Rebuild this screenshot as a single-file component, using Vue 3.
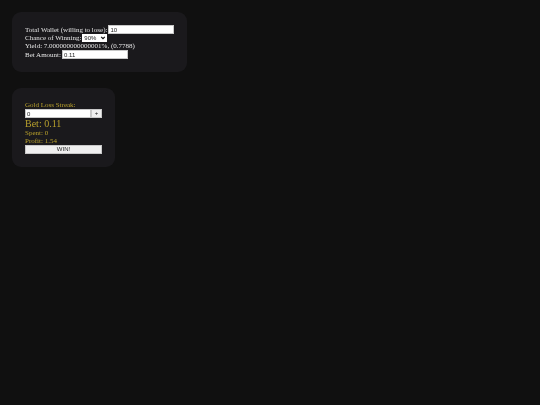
<script setup>
import { ref } from 'vue'

const wallet = ref('10')
const chance = ref('90')
const betAmount = ref('0.11')
const streak = ref(0)
const chances = ['90', '80', '70', '60', '50']
</script>

<template>
  <main class="page">
    <section class="card">
      <div class="row">
        <label for="wallet">Total Wallet (willing to lose):</label>
        <input id="wallet" v-model="wallet" class="field" type="text">
      </div>
      <div class="row">
        <label for="chance">Chance of Winning:</label>
        <span class="picker">
          <select id="chance" v-model="chance">
            <option v-for="c in chances" :key="c" :value="c">{{ c }}%</option>
          </select>
          <svg class="chevron" viewBox="0 0 6 4" aria-hidden="true">
            <path d="M1.2 0.8 L3 2.6 L4.8 0.8" />
          </svg>
        </span>
      </div>
      <div class="row">Yield: 7.000000000000001%, (0.7788)</div>
      <div class="row">
        <label for="bet">Bet Amount:</label>
        <input id="bet" v-model="betAmount" class="field" type="text">
      </div>
    </section>

    <section class="card gold">
      <label class="row" for="streak">Gold Loss Streak:</label>
      <div class="streak">
        <input id="streak" v-model="streak" class="field" type="text">
        <button class="plus" type="button" @click="streak++">+</button>
      </div>
      <div class="bet">Bet: 0.11</div>
      <div class="row">Spent: 0</div>
      <div class="row">Profit: 1.54</div>
      <button class="win" type="button" @click="streak = 0">WIN!</button>
    </section>
  </main>
</template>

<style>
body {
  margin: 0;
  background: #101010;
}
</style>

<style scoped>
.page {
  display: flex;
  flex-direction: column;
  align-items: flex-start;
  gap: 16px;
  padding: 12px;
  color: #e4e4e4;
  font: 7px/8px "Liberation Serif", serif;
  will-change: transform;
}

.card {
  padding: 13px;
  border-radius: 9px;
  background: #1a191c;
}

.row {
  display: flex;
  align-items: center;
  gap: 1px;
  min-height: 8px;
  white-space: nowrap;
}

input,
select,
button {
  box-sizing: border-box;
  margin: 0;
  border: 0;
  border-radius: 0;
  color: #222;
  font: 6px/8px "Liberation Sans", sans-serif;
}

.field {
  width: 66px;
  height: 9px;
  padding: 0 1px;
  border: 1px solid #c8c8c8;
  background: #fff;
}

.picker {
  position: relative;
  display: flex;
}

select {
  width: 25px;
  height: 8px;
  padding: 0 2px;
  appearance: none;
  background: #fff;
}

.chevron {
  position: absolute;
  top: 2px;
  right: 1px;
  width: 6px;
  height: 4px;
  fill: none;
  stroke: #111;
  stroke-width: 1.2;
  pointer-events: none;
}

.gold {
  display: flex;
  flex-direction: column;
  color: #b8a02c;
}

.streak {
  display: flex;
}

button {
  height: 9px;
  padding: 0;
  border: 1px solid #c8c8c8;
  background: #efefef;
  line-height: 7px;
  text-align: center;
}

.plus {
  width: 11px;
}

.bet {
  font-size: 10px;
  line-height: 11px;
}
</style>
